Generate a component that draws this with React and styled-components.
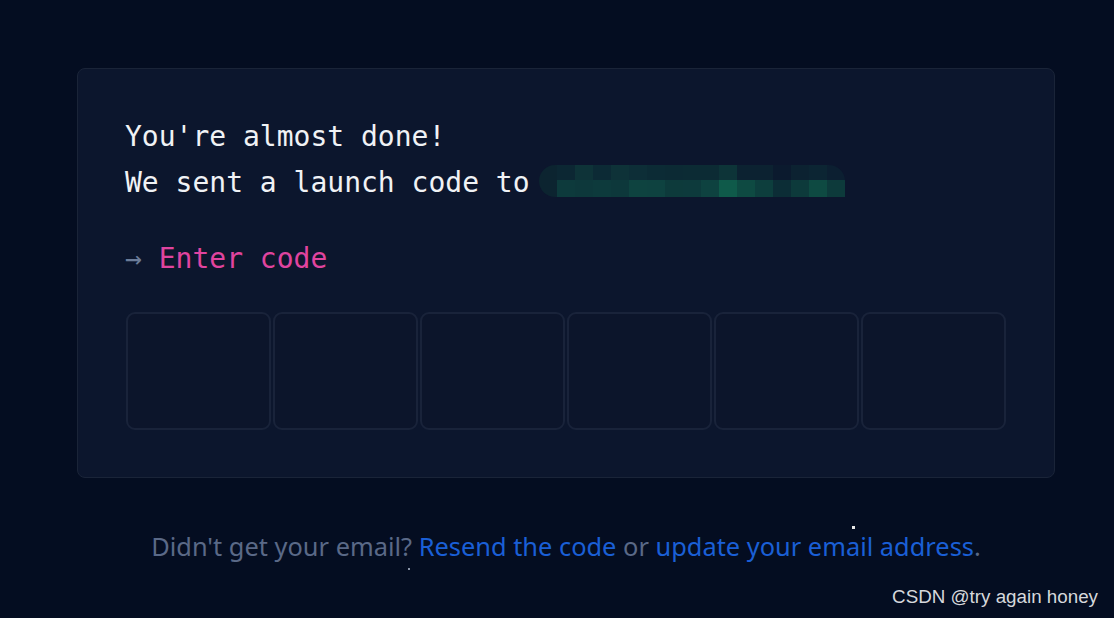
import React from "react";
import styled, { createGlobalStyle } from "styled-components";

const Global = createGlobalStyle`
  html, body { margin: 0; padding: 0; background: #040d21; }
  body { width: 1114px; height: 618px; overflow: hidden; }
`;

const Page = styled.div`
  position: relative;
  width: 1114px;
  height: 618px;
  box-sizing: border-box;
  padding: 68px 59px 0 77px;
  display: flex;
  flex-direction: column;
  background: #040d21;
`;

const Card = styled.section`
  box-sizing: border-box;
  width: 978px;
  height: 410px;
  padding: 45px 48px 47px 47px;
  background: #0c162d;
  border: 1px solid #1a2438;
  border-radius: 8px;
  font-family: "DejaVu Sans Mono", "Liberation Mono", monospace;
  font-size: 28px;
  line-height: 46px;
  color: #f0f2f5;
  display: flex;
  flex-direction: column;
`;

const Line = styled.div`
  display: flex;
  align-items: center;
  white-space: pre;
`;

const Mosaic = styled.div`
  margin: 0 0 4px 9px;
  display: grid;
  grid-template-columns: repeat(17, 18px);
  grid-template-rows: 15px 17px;
  border-radius: 16px 16px 0 16px;
  overflow: hidden;
`;

const Cell = styled.span`
  background: ${(p) => p.$c};
`;

const Prompt = styled.div`
  margin-top: 30px;
  white-space: pre;
  color: #e0449f;
`;

const Arrow = styled.span`
  color: #6b7c99;
`;

const CodeRow = styled.div`
  margin-top: 30px;
  margin-left: 1px;
  display: grid;
  grid-template-columns: repeat(6, 1fr);
  gap: 2px;
`;

const CodeBox = styled.div`
  box-sizing: border-box;
  height: 118px;
  border: 2px solid #19233a;
  border-radius: 9px;
  background: #0c152b;
`;

const Footer = styled.p`
  margin: 51px 0 0;
  width: 978px;
  text-align: center;
  font-family: "Noto Sans", "Open Sans", sans-serif;
  font-size: 25.4px;
  color: #5a6987;
`;

const Link = styled.a`
  color: #1a5fd6;
  text-decoration: none;
`;

const Watermark = styled.div`
  position: absolute;
  right: 16px;
  bottom: 10px;
  font-family: "Liberation Sans", Arial, sans-serif;
  font-size: 18.8px;
  color: #d6d8dc;
`;

const Dot = styled.span`
  position: absolute;
  left: ${(p) => p.$x}px;
  top: ${(p) => p.$y}px;
  width: ${(p) => p.$s}px;
  height: ${(p) => p.$s}px;
  background: ${(p) => p.$c};
`;

const top = [
  "#0c2430", "#0c2733", "#0e3338", "#0c2a35", "#0e3238", "#0d2e37", "#0c2b35",
  "#0c2a34", "#0c2b34", "#0c2b34", "#0d3438", "#0c2231", "#0c2231", "#0b1a2e",
  "#0c2231", "#0c2533", "#0c1f31",
];
const bottom = [
  "#0c2430", "#0d3a3c", "#0d383b", "#0d3a3c", "#0d383b", "#0e4340", "#0e4240",
  "#0d3a3b", "#0d3a3c", "#0e4240", "#0f5a4a", "#0e4a42", "#0d3e3d", "#0c2d36",
  "#0d3a3b", "#0e4a42", "#0d3a3b",
];

export default function App() {
  return (
    <>
      <Global />
      <Page>
        <Card>
          <Line>You're almost done!</Line>
          <Line>
            We sent a launch code to
            <Mosaic>
              {top.map((c, i) => (
                <Cell key={"t" + i} $c={c} />
              ))}
              {bottom.map((c, i) => (
                <Cell key={"b" + i} $c={c} />
              ))}
            </Mosaic>
          </Line>
          <Prompt>
            <Arrow>→</Arrow> Enter code
          </Prompt>
          <CodeRow>
            {[0, 1, 2, 3, 4, 5].map((i) => (
              <CodeBox key={i} />
            ))}
          </CodeRow>
        </Card>
        <Footer>
          Didn't get your email? <Link>Resend the code</Link> or{" "}
          <Link>update your email address</Link>.
        </Footer>
        <Dot $x={852} $y={526} $s={3} $c="#e8e8e8" />
        <Dot $x={408} $y={568} $s={2} $c="#8a94a8" />
        <Watermark>CSDN @try again honey</Watermark>
      </Page>
    </>
  );
}
